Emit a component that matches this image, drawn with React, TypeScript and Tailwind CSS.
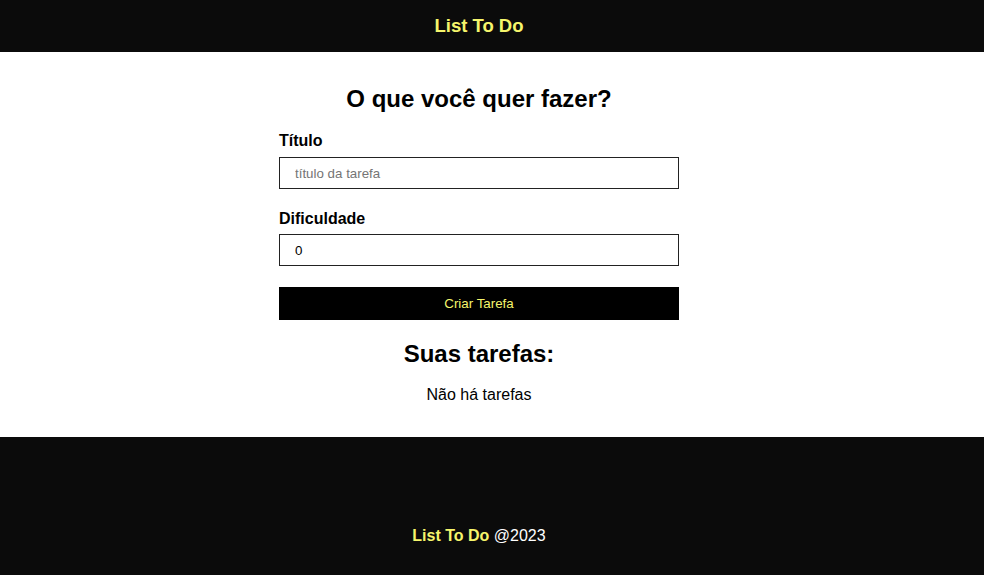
export default function App() {
  return (
    <div className="min-h-screen bg-white pr-[26px] font-['Liberation_Sans',Arial,sans-serif]">
      <header className="h-[52px] bg-[#0b0b0b] flex items-center justify-center -mr-[26px] pr-[26px]">
        <h1 className="text-[18.5px] font-bold text-[#f5f56c]">List To Do</h1>
      </header>
      <main className="pt-[33px] pb-[33px] flex flex-col items-center">
        <h2 className="text-[24px] leading-[28px] font-bold text-black">O que você quer fazer?</h2>
        <form className="w-[400px] mt-[19px] flex flex-col" onSubmit={(e) => e.preventDefault()}>
          <label className="text-[16px] leading-[18px] font-bold text-black">Título</label>
          <input
            type="text"
            placeholder="título da tarefa"
            className="mt-[7px] h-[32px] border border-[#222] px-[15px] text-[13.33px] text-black placeholder:text-[#757575] outline-none"
          />
          <label className="mt-[21px] text-[16px] leading-[18px] font-bold text-black">Dificuldade</label>
          <input
            type="text"
            defaultValue="0"
            className="mt-[6px] h-[32px] border border-[#222] px-[15px] text-[13.33px] text-black outline-none"
          />
          <button type="submit" className="mt-[21px] h-[33px] bg-black text-[13.33px] text-[#f5f56c]">
            Criar Tarefa
          </button>
        </form>
        <h2 className="mt-[20px] text-[24px] leading-[28px] font-bold text-black">Suas tarefas:</h2>
        <p className="mt-[18px] text-[16px] leading-[18px] text-black">Não há tarefas</p>
      </main>
      <footer className="h-[198px] bg-[#0b0b0b] flex items-center justify-center text-[16px] -mr-[26px] pr-[26px]">
        <p className="text-white">
          <span className="font-bold text-[#f5f56c]">List To Do</span> @2023
        </p>
      </footer>
    </div>
  )
}
